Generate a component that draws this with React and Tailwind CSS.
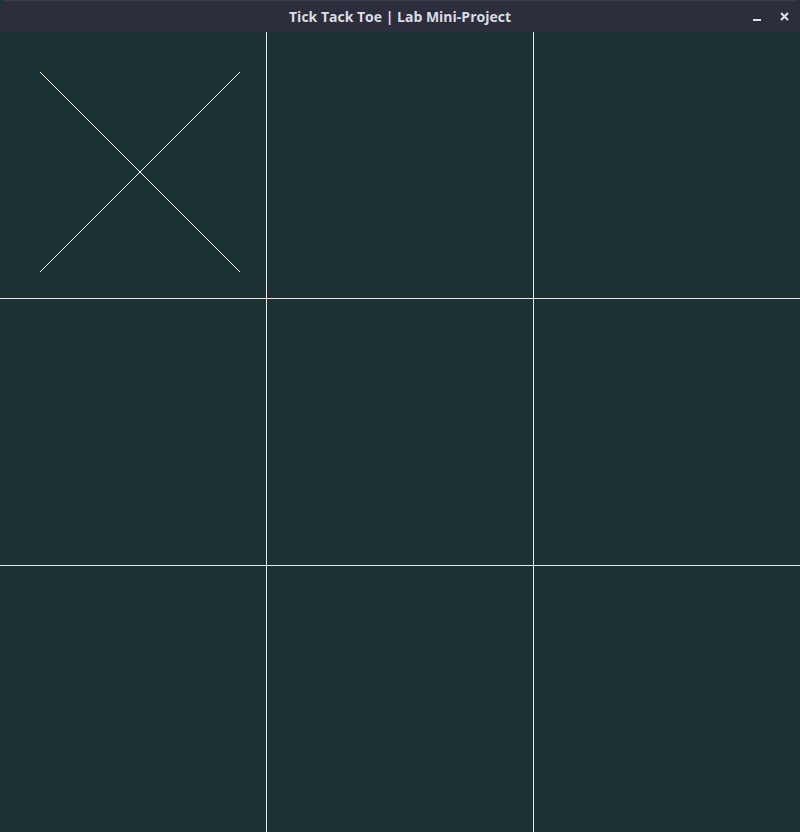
import React from "react";

const board = ["X", "", "", "", "", "", "", "", ""];

function Cross() {
  return (
    <svg width="266" height="266" viewBox="0 0 266 266" className="block">
      <line x1="40" y1="40" x2="240" y2="240" stroke="#ffffff" strokeWidth="1" />
      <line x1="240" y1="40" x2="40" y2="240" stroke="#ffffff" strokeWidth="1" />
    </svg>
  );
}

export default function App() {
  return (
    <div className="w-[800px] h-[832px] flex flex-col bg-[#1b3234] overflow-hidden">
      {/* title bar */}
      <div className="h-8 shrink-0 flex items-center bg-[#2c2f3b] rounded-t-[5px] border-t border-[#3b3e4a] relative">
        <div className="flex-1 text-center text-[14px] font-bold text-[#d8dee9] [font-family:'Open_Sans',sans-serif]">
          Tick Tack Toe | Lab Mini-Project
        </div>
        <div className="absolute right-0 top-0 h-full flex items-center gap-[19px] pr-[11px] text-[#dfe3ea]">
          <div className="w-[8px] h-[2px] bg-[#dfe3ea] mt-[6px]" />
          <svg width="9" height="9" viewBox="0 0 9 9">
            <path d="M1 1L8 8M8 1L1 8" stroke="#dfe3ea" strokeWidth="2" />
          </svg>
        </div>
      </div>

      {/* board */}
      <div className="grid grid-cols-[266px_266px_266px] grid-rows-[266px_266px_266px] gap-px bg-[#e8e8e8] w-[800px] h-[800px]">
        {board.map((v, i) => (
          <div key={i} className="bg-[#1b3234]">
            {v === "X" && <Cross />}
          </div>
        ))}
      </div>
    </div>
  );
}
